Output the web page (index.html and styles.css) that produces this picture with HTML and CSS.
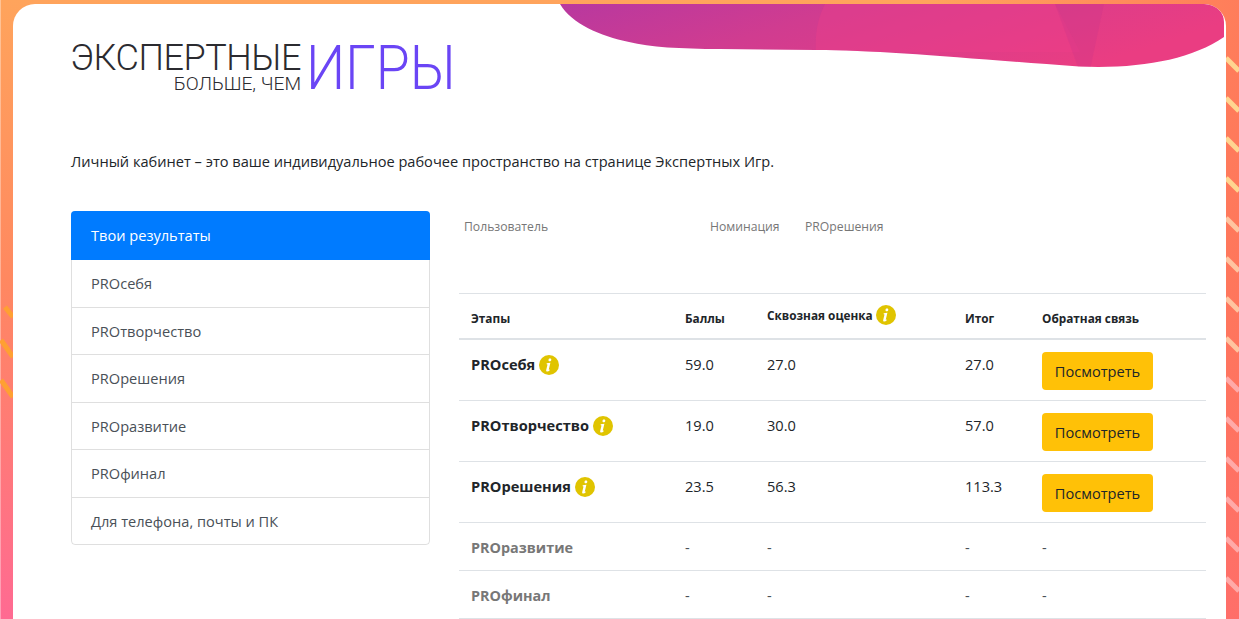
FILE: index.html
```html
<!DOCTYPE html>
<html lang="ru">
<head>
<meta charset="utf-8">
<title>Экспертные игры</title>
<link rel="stylesheet" href="styles.css">
</head>
<body>
<svg class="stripes" width="1239" height="619" viewBox="0 0 1239 619" aria-hidden="true">
  <g class="stripes-right">
    <path d="M1226 58l13 13M1226 98l13 13M1226 138l13 13M1226 178l13 13"/>
    <path class="mid" d="M1226 218l13 13M1226 258l13 13M1226 298l13 13M1226 338l13 13"/>
    <path class="fade" d="M1226 378l13 13M1226 418l13 13M1226 458l13 13M1226 498l13 13M1226 538l13 13M1226 578l13 13"/>
  </g>
  <g class="stripes-left">
    <path d="M5 307l8 10M1 340l12 17M1 380l12 17"/>
  </g>
</svg>
<main class="card">
  <svg class="wave" width="665" height="64" viewBox="560 4 665 64" aria-hidden="true">
    <defs>
      <linearGradient id="waveFill" x1="0" y1="0" x2="1" y2="0.3">
        <stop offset="0" stop-color="#b8389f"/>
        <stop offset="0.4" stop-color="#d03c90"/>
        <stop offset="1" stop-color="#ea3d82"/>
      </linearGradient>
      <clipPath id="waveClip">
        <path d="M560 4H1205C1216 4 1224 12 1224 22V37C1190 60 1140 69 1079 66.500C960 58 880 50 816 50L720 49C680 49 650 47 629 42C600 36 572 24 560 4Z"/>
      </clipPath>
    </defs>
    <g clip-path="url(#waveClip)">
      <rect x="560" y="4" width="665" height="64" fill="url(#waveFill)"/>
      <path class="wave-light" d="M825 4C817 20 815 35 816 52H1080L1055 4Z"/>
      <path class="wave-shade" d="M1055 4H1104L1090 70H1079Z"/>
    </g>
  </svg>
  <header class="logo">
    <div class="logo-left">
      <span class="logo-main">ЭКСПЕРТНЫЕ</span>
      <span class="logo-sub">БОЛЬШЕ, ЧЕМ</span>
    </div>
    <span class="logo-big">ИГРЫ</span>
  </header>
  <p class="intro">Личный кабинет – это ваше индивидуальное рабочее пространство на странице Экспертных Игр.</p>
  <div class="content">
    <nav class="menu">
      <a class="menu-item active">Твои результаты</a>
      <a class="menu-item">PROсебя</a>
      <a class="menu-item">PROтворчество</a>
      <a class="menu-item">PROрешения</a>
      <a class="menu-item">PROразвитие</a>
      <a class="menu-item">PROфинал</a>
      <a class="menu-item">Для телефона, почты и ПК</a>
    </nav>
    <section class="results">
      <div class="user-row">
        <span class="user-name">Пользователь</span>
        <span class="user-nom">Номинация</span>
        <span>PROрешения</span>
      </div>
      <table class="table">
        <colgroup>
          <col class="c1"><col class="c2"><col class="c3"><col class="c4"><col class="c5">
        </colgroup>
        <thead>
          <tr>
            <th>Этапы</th>
            <th>Баллы</th>
            <th class="th-info">Сквозная оценка <svg class="info" viewBox="0 0 20 20"><circle cx="10" cy="10" r="10" fill="#e0c400"/><path d="M10.9 3.6c.9 0 1.5.5 1.4 1.3-.1.8-.8 1.3-1.6 1.3-.8 0-1.3-.5-1.2-1.3.1-.8.6-1.3 1.400-1.300zM7.700 8.200l3.700-.4-1.600 6.600c-.1.500.2.600.9.100l.3.500c-1 1-1.900 1.500-2.800 1.500-.9 0-1.200-.6-1-1.500l1.200-5c.1-.6 0-.8-.8-.8z" fill="#fff"/></svg></th>
            <th>Итог</th>
            <th>Обратная связь</th>
          </tr>
        </thead>
        <tbody>
          <tr>
            <td class="stage">PROсебя <svg class="info" viewBox="0 0 20 20"><circle cx="10" cy="10" r="10" fill="#e0c400"/><path d="M10.9 3.6c.9 0 1.5.5 1.4 1.3-.1.8-.8 1.3-1.6 1.3-.8 0-1.3-.5-1.2-1.3.1-.8.6-1.3 1.400-1.300zM7.700 8.200l3.700-.4-1.600 6.600c-.1.500.2.600.9.100l.3.500c-1 1-1.900 1.500-2.800 1.500-.9 0-1.200-.6-1-1.500l1.200-5c.1-.6 0-.8-.8-.8z" fill="#fff"/></svg></td>
            <td>59.0</td><td>27.0</td><td>27.0</td>
            <td><a class="btn">Посмотреть</a></td>
          </tr>
          <tr>
            <td class="stage">PROтворчество <svg class="info" viewBox="0 0 20 20"><circle cx="10" cy="10" r="10" fill="#e0c400"/><path d="M10.9 3.6c.9 0 1.5.5 1.4 1.3-.1.8-.8 1.3-1.6 1.3-.8 0-1.3-.5-1.2-1.3.1-.8.6-1.3 1.400-1.300zM7.700 8.200l3.700-.4-1.600 6.600c-.1.500.2.600.9.100l.3.500c-1 1-1.900 1.500-2.800 1.500-.9 0-1.200-.6-1-1.500l1.200-5c.1-.6 0-.8-.8-.8z" fill="#fff"/></svg></td>
            <td>19.0</td><td>30.0</td><td>57.0</td>
            <td><a class="btn">Посмотреть</a></td>
          </tr>
          <tr>
            <td class="stage">PROрешения <svg class="info" viewBox="0 0 20 20"><circle cx="10" cy="10" r="10" fill="#e0c400"/><path d="M10.9 3.6c.9 0 1.5.5 1.4 1.3-.1.8-.8 1.3-1.6 1.3-.8 0-1.3-.5-1.2-1.3.1-.8.6-1.3 1.400-1.300zM7.700 8.200l3.700-.4-1.600 6.600c-.1.500.2.600.9.100l.3.500c-1 1-1.900 1.500-2.800 1.500-.9 0-1.200-.6-1-1.500l1.200-5c.1-.6 0-.8-.8-.8z" fill="#fff"/></svg></td>
            <td>23.5</td><td>56.3</td><td>113.3</td>
            <td><a class="btn">Посмотреть</a></td>
          </tr>
          <tr class="muted">
            <td class="stage">PROразвитие</td>
            <td>-</td><td>-</td><td>-</td><td>-</td>
          </tr>
          <tr class="muted">
            <td class="stage">PROфинал</td>
            <td>-</td><td>-</td><td>-</td><td>-</td>
          </tr>
        </tbody>
      </table>
    </section>
  </div>
</main>
</body>
</html>
```

FILE: styles.css
```css
* { box-sizing: border-box; }
html, body { height: 100%; overflow: hidden; }
body {
  margin: 0;
  padding: 4px 13px 0 12px;
  border-left: 1px solid rgba(255,255,255,.35);
  font-family: "Open Sans", "Noto Sans", sans-serif;
  font-size: 14.6px;
  line-height: 1.5;
  color: #212529;
  background:
    linear-gradient(to right, rgba(255,110,90,0) 75%, rgba(255,112,90,.75) 100%),
    linear-gradient(180deg, #ffa45c 0%, #ff8860 45%, #ff6a92 100%);
}
.stripes { position: absolute; left: 0; top: 0; }
.stripes path { fill: none; stroke-width: 5; }
.stripes-right path { stroke: #ffd590; }
.stripes-right .mid { stroke: #ffc4a0; }
.stripes-right .fade { stroke: #ffaaa8; }
.stripes-left path { stroke: #ffa033; }

.card {
  position: relative;
  width: 1213px;
  height: 615px;
  padding: 34px 20px 0 58px;
  background: #fff;
  border-radius: 22px 22px 0 0;
  overflow: hidden;
}
.wave { position: absolute; left: 547px; top: 0; }
.wave-light { fill: #f0408a; opacity: .35; }
.wave-shade { fill: #c0308a; opacity: .2; }

.logo { display: flex; align-items: flex-start; gap: 5px; height: 60px; }
.logo-left { display: flex; flex-direction: column; align-items: flex-end; width: 230px; }
.logo-main { margin-top: 2px; font-family: Roboto, sans-serif; font-weight: 300; font-size: 36px; line-height: 36px; color: #2b2b30; white-space: nowrap; letter-spacing: -.45px; }
.logo-sub { font-family: Roboto, sans-serif; font-weight: 300; font-size: 19.2px; line-height: 16px; color: #2b2b30; white-space: nowrap; }
.logo-big { font-family: Roboto, sans-serif; font-weight: 300; font-size: 62px; line-height: 60px; color: #6a45f5; transform: scaleX(.89); transform-origin: left center; }

.intro { margin: 0; padding-top: 52px; height: 113px; line-height: 22px; }

.content { display: grid; grid-template-columns: 359px 747px; column-gap: 29px; }
.menu {
  display: flex;
  flex-direction: column;
  align-self: start;
  border: 1px solid rgba(0,0,0,.125);
  border-radius: 4px;
}
.menu-item {
  display: block;
  height: 47.5px;
  padding: 12px 19px;
  color: #495057;
  line-height: 23px;
  border-top: 1px solid rgba(0,0,0,.125);
}
.menu-item:first-child { border-top: 0; }
.menu-item.active {
  height: 49px;
  margin: -1px -1px -1px;
  padding: 13px 20px;
  color: #fff;
  background: #007bff;
  border-radius: 4px 4px 0 0;
}
.active + .menu-item { border-top-color: transparent; }

.user-row { display: flex; height: 82px; padding: 6px 0 0 5px; font-size: 12.2px; line-height: 20px; color: #777; }
.user-name { width: 246px; }
.user-nom { width: 95px; }

.table { width: 747px; table-layout: fixed; border-collapse: collapse; }
.c1 { width: 214px; } .c2 { width: 82px; } .c3 { width: 198px; } .c4 { width: 77px; } .c5 { width: 176px; }
.table th {
  height: 45px;
  padding: 14px 12px 0;
  text-align: left;
  vertical-align: top;
  font-size: 11.8px;
  line-height: 20px;
  font-weight: 700;
  border-top: 1px solid #dee2e6;
  border-bottom: 2px solid #dee2e6;
}
.table .th-info { padding-top: 11px; }
.table td {
  height: 61px;
  padding: 12px 12px 10px;
  vertical-align: top;
  line-height: 25px;
  border-bottom: 1px solid #dee2e6;
}
.table tbody tr:first-child td { height: 62px; }
.table .stage { font-weight: 700; }
.info { width: 20px; height: 20px; vertical-align: -5px; }
.muted td { height: 47.5px; color: #495057; }
.table .muted .stage { color: #777; font-size: 14.4px; }

.btn {
  display: block;
  width: 111px;
  height: 38px;
  text-align: center;
  line-height: 38px;
  color: #212529;
  background: #ffc107;
  border-radius: 4px;
}
```
